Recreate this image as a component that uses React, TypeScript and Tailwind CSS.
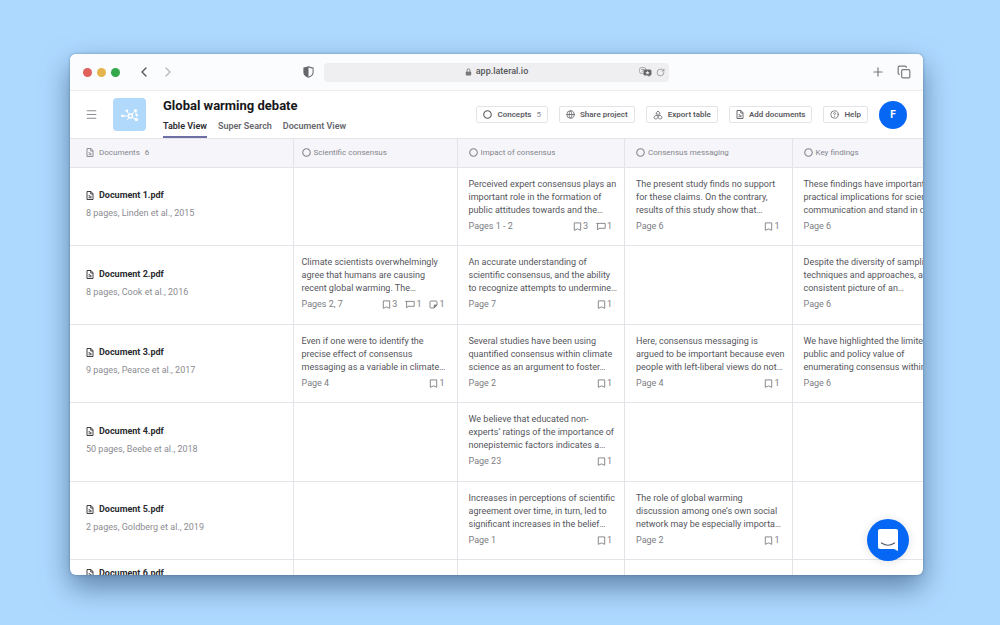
import type { ReactNode } from "react";
import { ChevronLeft, ChevronRight, Copy, Globe, HelpCircle, Menu, Plus, RotateCw } from "lucide-react";

type Note = {
  text: string;
  page: string;
  bookmarks?: number;
  comments?: number;
  stickies?: number;
};

type Row = {
  name: string;
  meta?: string;
  cells: (Note | null)[];
};

const concepts = ["Scientific consensus", "Impact of consensus", "Consensus messaging", "Key findings"];

const rows: Row[] = [
  {
    name: "Document 1.pdf",
    meta: "8 pages, Linden et al., 2015",
    cells: [
      null,
      {
        text: "Perceived expert consensus plays an\nimportant role in the formation of\npublic attitudes towards and the…",
        page: "Pages 1 - 2",
        bookmarks: 3,
        comments: 1,
      },
      {
        text: "The present study finds no support\nfor these claims. On the contrary,\nresults of this study show that…",
        page: "Page 6",
        bookmarks: 1,
      },
      {
        text: "These findings have important\npractical implications for science\ncommunication and stand in direct",
        page: "Page 6",
      },
    ],
  },
  {
    name: "Document 2.pdf",
    meta: "8 pages, Cook et al., 2016",
    cells: [
      {
        text: "Climate scientists overwhelmingly\nagree that humans are causing\nrecent global warming. The…",
        page: "Pages 2, 7",
        bookmarks: 3,
        comments: 1,
        stickies: 1,
      },
      {
        text: "An accurate understanding of\nscientific consensus, and the ability\nto recognize attempts to undermine…",
        page: "Page 7",
        bookmarks: 1,
      },
      null,
      {
        text: "Despite the diversity of sampling\ntechniques and approaches, a\nconsistent picture of an…",
        page: "Page 6",
      },
    ],
  },
  {
    name: "Document 3.pdf",
    meta: "9 pages, Pearce et al., 2017",
    cells: [
      {
        text: "Even if one were to identify the\nprecise effect of consensus\nmessaging as a variable in climate…",
        page: "Page 4",
        bookmarks: 1,
      },
      {
        text: "Several studies have been using\nquantified consensus within climate\nscience as an argument to foster…",
        page: "Page 2",
        bookmarks: 1,
      },
      {
        text: "Here, consensus messaging is\nargued to be important because even\npeople with left-liberal views do not…",
        page: "Page 4",
        bookmarks: 1,
      },
      {
        text: "We have highlighted the limited\npublic and policy value of\nenumerating consensus within…",
        page: "Page 6",
      },
    ],
  },
  {
    name: "Document 4.pdf",
    meta: "50 pages, Beebe et al., 2018",
    cells: [
      null,
      {
        text: "We believe that educated non-\nexperts’ ratings of the importance of\nnonepistemic factors indicates a…",
        page: "Page 23",
        bookmarks: 1,
      },
      null,
      null,
    ],
  },
  {
    name: "Document 5.pdf",
    meta: "2 pages, Goldberg et al., 2019",
    cells: [
      null,
      {
        text: "Increases in perceptions of scientific\nagreement over time, in turn, led to\nsignificant increases in the belief…",
        page: "Page 1",
        bookmarks: 1,
      },
      {
        text: "The role of global warming\ndiscussion among one’s own social\nnetwork may be especially importa…",
        page: "Page 2",
        bookmarks: 1,
      },
      null,
    ],
  },
  {
    name: "Document 6.pdf",
    cells: [null, null, null, null],
  },
];

const DocIcon = ({ className }: { className: string }) => (
  <svg viewBox="0 0 16 18" className={className} fill="none" stroke="currentColor" strokeWidth="1.8">
    <path d="M2 1h8l4 4.500V17H2z" strokeLinejoin="round" />
    <path d="M9.500 1v5H14" />
    <path d="M5 9.500h3v2h3M5 13.500h6" strokeWidth="1.600" />
  </svg>
);

const RingIcon = () => (
  <svg viewBox="0 0 10 10" className="size-[9px] shrink-0" fill="none" stroke="currentColor">
    <circle cx="5" cy="5" r="4.200" strokeWidth="1.200" />
  </svg>
);

const ExportIcon = () => (
  <svg viewBox="0 0 20 20" className="size-[10px]" fill="none" stroke="currentColor" strokeWidth="1.600">
    <path d="M6.500 9.500V5.500L10 2l3.500 3.500v4" strokeLinejoin="round" />
    <path d="M10 12.500c-1.500-3-8-1.500-8 2.500 0 3.500 6.500 4 8 0 1.500 4 8 3.500 8 0 0-4-6.500-5.500-8-2.500z" strokeLinejoin="round" />
    <path d="M10 6.500v8" />
  </svg>
);

const BookmarkIcon = () => (
  <svg viewBox="0 0 9 9" className="size-[9px]" fill="none" stroke="currentColor" strokeWidth="0.900">
    <path d="M1.300.9h6.400v7.400L4.500 6.900 1.300 8.300z" />
  </svg>
);

const CommentIcon = () => (
  <svg viewBox="0 0 10 9" className="h-[9px] w-[10px]" fill="none" stroke="currentColor" strokeWidth="0.900">
    <path d="M.3 1.400h8.900v4.900H3L1.600 8V1.400" />
  </svg>
);

const StickyIcon = () => (
  <svg viewBox="0 0 9 9" className="size-[9px]" fill="none" stroke="currentColor" strokeWidth="0.900">
    <path d="M2 1h5q1 0 1 1v3L5.200 8H2Q1 8 1 7V2q0-1 1-1z" />
    <path d="M8 5H5.200v3z" fill="currentColor" />
  </svg>
);

const TranslateIcon = () => (
  <svg viewBox="0 0 26 20" className="h-[10px] w-[13px]">
    <rect x="1" y="1" width="13" height="12" rx="4" fill="none" stroke="#9b9c9e" strokeWidth="1.600" />
    <path d="M4 5h7M7.500 3v2M5 10c2-1 4-3 4.500-5" stroke="#8b8c8e" strokeWidth="1.300" fill="none" />
    <path d="M12 5h10q3 0 3 3v6q0 3-3 3l-2 2.500-2-2.500h-6q-3 0-3-3V8q0-3 3-3z" fill="#66676a" />
    <path d="m17 7 1 3 3 .5-2.200 1.800.7 3-2.500-1.800-2.500 1.800.7-3-2.200-1.800 3-.5z" fill="#efeff1" />
  </svg>
);

const LockIcon = () => (
  <svg viewBox="0 0 7 8" className="h-2 w-[7px] text-[#77787b]">
    <rect x="0.800" y="3.400" width="5.400" height="4.200" rx="0.800" fill="currentColor" />
    <path d="M2 3.600V2.300q0-1.500 1.500-1.500T5 2.300v1.300" fill="none" stroke="currentColor" strokeWidth="0.900" />
  </svg>
);

const ActionButton = ({ icon, children }: { icon: ReactNode; children: ReactNode }) => (
  <button
    type="button"
    className="flex h-[17px] items-center gap-[5px] rounded-[2px] border border-[#e4e4e8] px-1.5 text-[8px] font-semibold whitespace-nowrap text-[#5c5c62]"
  >
    {icon}
    {children}
  </button>
);

const BrowserBar = () => (
  <div className="grid h-[37px] shrink-0 grid-cols-[1fr_345px_1fr] items-center border-b border-[#ebecee] bg-[#fafcfd]">
    <div className="flex items-center pr-2.5 pl-[13px]">
      <div className="flex gap-[5px]">
        <span className="size-[9px] rounded-full bg-[#e0605a]" />
        <span className="size-[9px] rounded-full bg-[#e5b44c]" />
        <span className="size-[9px] rounded-full bg-[#35a84c]" />
      </div>
      <button type="button" aria-label="Back" className="ml-4 text-[#55565a]">
        <ChevronLeft className="size-4" strokeWidth={2} />
      </button>
      <button type="button" aria-label="Forward" className="ml-2 text-[#b9babd]">
        <ChevronRight className="size-4" strokeWidth={2} />
      </button>
      <svg viewBox="0 0 12 13" className="ml-auto h-3 w-[11px]">
        <path d="M6 .8Q8.500 2 11 2.200V7c0 2.800-2.200 4.200-5 5.200C3.200 11.200 1 9.800 1 7V2.200Q3.500 2 6 .8z" fill="none" stroke="#66676a" strokeWidth="1.100" />
        <path d="M6 .8v11.400C3.200 11.200 1 9.800 1 7V2.200Q3.500 2 6 .8z" fill="#66676a" />
      </svg>
    </div>
    <div className="flex h-[19px] items-center rounded-[4px] bg-[#efeff1] pr-1 pl-[30px]">
      <div className="flex flex-1 items-center justify-center gap-1 text-[9px] font-medium text-[#55565a]">
        <LockIcon />
        app.lateral.io
      </div>
      <div className="flex items-center gap-1">
        <TranslateIcon />
        <RotateCw className="size-[9px] text-[#8b8c8e]" strokeWidth={2} />
      </div>
    </div>
    <div className="flex items-center justify-end gap-3 pr-3 text-[#77787b]">
      <Plus className="size-[14px]" strokeWidth={2} />
      <Copy className="size-[14px]" strokeWidth={2} />
    </div>
  </div>
);

const ProjectHeader = () => (
  <header className="flex h-12 shrink-0 items-center border-b border-[#e3e3e8] pr-4 pl-[15px]">
    <button type="button" aria-label="Menu" className="text-[#8c8c92]">
      <Menu className="size-[13px]" strokeWidth={2} />
    </button>
    <div className="ml-[15px] flex size-[33px] items-center justify-center rounded-[4px] bg-[#b0d9fc]">
      <svg viewBox="0 0 20 16" className="h-4 w-5" stroke="#fff" fill="#fff">
        <path d="M3 9h5M9.500 9 7 4M10 9l5.500-5.500M11 10l5 2.500M15.500 4l1 4.500M9 10l-1.500 3" strokeWidth="1" fill="none" />
        <circle cx="10.500" cy="9" r="2" strokeWidth="1.400" fill="#b0d9fc" />
        <circle cx="2.500" cy="8.800" r="1.400" stroke="none" />
        <circle cx="6.800" cy="3.800" r="1.300" stroke="none" />
        <circle cx="15.500" cy="3.500" r="1.600" stroke="none" />
        <circle cx="16.800" cy="8.200" r="1.200" stroke="none" />
        <circle cx="16.300" cy="12.500" r="1.700" stroke="none" />
      </svg>
    </div>
    <div className="ml-[17px] flex h-full flex-col justify-between pt-1.5">
      <h1 className="text-[13px] leading-[17px] font-bold whitespace-nowrap text-[#17171b]">Global warming debate</h1>
      <nav className="flex gap-[11px] text-[9px] leading-[11px] font-semibold whitespace-nowrap text-[#66666c]">
        <a href="#table" className="border-b-2 border-[#6d6fa6] pb-1 text-[#2b2b30]">
          Table View
        </a>
        <a href="#search">Super Search</a>
        <a href="#document">Document View</a>
      </nav>
    </div>
    <div className="ml-auto flex items-center gap-[11px]">
      <ActionButton icon={<RingIcon />}>
        Concepts <span className="font-normal text-[#8c8c92]">5</span>
      </ActionButton>
      <ActionButton icon={<Globe className="size-[9px]" strokeWidth={2} />}>Share project</ActionButton>
      <ActionButton icon={<ExportIcon />}>Export table</ActionButton>
      <ActionButton icon={<DocIcon className="h-[9px] w-2" />}>Add documents</ActionButton>
      <ActionButton icon={<HelpCircle className="size-[9px]" strokeWidth={2} />}>Help</ActionButton>
      <button type="button" className="size-7 rounded-full bg-[#0767f5] text-[10px] font-bold text-white">
        F
      </button>
    </div>
  </header>
);

const Count = ({ icon, value }: { icon: ReactNode; value?: number }) =>
  value ? (
    <span className="flex items-center gap-px">
      {icon}
      {value}
    </span>
  ) : null;

const NoteCell = ({ note }: { note: Note }) => (
  <div className="text-[9px] leading-[13px] text-[#55555b]">
    <p className="whitespace-pre">{note.text}</p>
    <div className="mt-[3px] flex justify-between text-[#7d7d83]">
      <span>{note.page}</span>
      <span className="flex items-center gap-2">
        <Count icon={<BookmarkIcon />} value={note.bookmarks} />
        <Count icon={<CommentIcon />} value={note.comments} />
        <Count icon={<StickyIcon />} value={note.stickies} />
      </span>
    </div>
  </div>
);

const DocumentTable = () => (
  <div className="min-h-0 flex-1 overflow-hidden">
    <table className="w-[890px] table-fixed border-collapse text-left">
      <colgroup>
        <col className="w-[223px]" />
        <col className="w-[164px]" />
        <col />
        <col />
        <col />
      </colgroup>
      <thead>
        <tr className="h-7 border-b border-[#e3e3e8] bg-[#f5f5fa] text-[8px] text-[#85858c]">
          <th className="border-r border-[#e3e3e8] px-4 font-normal">
            <div className="flex items-center gap-[5px]">
              <DocIcon className="h-[9px] w-2" />
              Documents <span>6</span>
            </div>
          </th>
          {concepts.map((concept) => (
            <th key={concept} className="border-r border-[#e3e3e8] pr-3 pl-[11px] font-normal nth-2:pl-2">
              <div className="flex items-center gap-[3px]">
                <RingIcon />
                {concept}
              </div>
            </th>
          ))}
        </tr>
      </thead>
      <tbody>
        {rows.map((row) => (
          <tr key={row.name} className="h-[79px] border-b border-[#e3e3e8] last:h-8 odd:h-[78px]">
            <td className="border-r border-[#e3e3e8] px-4 pt-0 pb-[3px] align-middle">
              <div className="flex items-center gap-[5px] text-[9px] leading-[13px] font-bold text-[#2b2b30]">
                <DocIcon className="h-[9px] w-2" />
                {row.name}
              </div>
              {row.meta && <p className="mt-[5px] text-[9px] leading-[13px] text-[#8c8c92]">{row.meta}</p>}
            </td>
            {row.cells.map((note, i) => (
              <td
                key={concepts[i]}
                className="border-r border-[#e3e3e8] pt-[10px] pr-3 pb-0 pl-[11px] align-top nth-2:pl-2"
              >
                {note && <NoteCell note={note} />}
              </td>
            ))}
          </tr>
        ))}
      </tbody>
    </table>
  </div>
);

export default function App() {
  return (
    <div className="h-screen bg-[#aed9ff] pt-[54px] pr-[77px] pb-[50px] pl-[70px] font-['Roboto',sans-serif]">
      <main className="relative flex h-full flex-col overflow-hidden rounded-[6px] bg-white shadow-[0_12px_28px_rgba(40,70,110,0.6),0_0_3px_rgba(40,70,110,0.4)]">
        <BrowserBar />
        <ProjectHeader />
        <DocumentTable />
        <button
          type="button"
          aria-label="Open chat"
          className="absolute right-[14px] bottom-[14px] flex size-[42px] items-center justify-center rounded-full bg-[#0767f5] shadow-[0_1px_10px_rgba(0,0,0,0.12)]"
        >
          <svg viewBox="0 0 20 22" className="h-[22px] w-5">
            <path d="M2 0h16q2 0 2 2v20l-4-2H2q-2 0-2-2V2q0-2 2-2z" fill="#fff" />
            <path d="M3.500 14q6.500 4.500 13 0" fill="none" stroke="#55606f" strokeWidth="1.200" strokeLinecap="round" />
          </svg>
        </button>
      </main>
    </div>
  );
}
